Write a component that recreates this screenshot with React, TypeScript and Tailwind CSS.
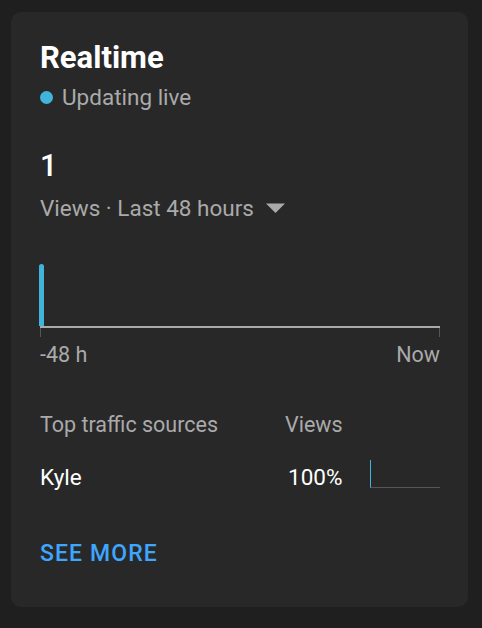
export default function App() {
  return (
    <main className="min-h-screen w-full bg-[#1f1f1f] px-[11px] pt-[12px] font-['Roboto',sans-serif]">
      {/* Realtime card */}
      <div className="w-[457px] h-[595px] rounded-[10px] bg-[#282828] pl-[29px] pr-[28px] pt-[28px]">
        <h2 className="text-[31px] leading-[36px] font-bold text-white">Realtime</h2>
        <div className="flex items-center gap-[9px] mt-[6px]">
          <span className="w-[13px] h-[13px] rounded-full bg-[#41b4db]" />
          <span className="text-[22.5px] leading-[30px] text-[#aaaaaa]">Updating live</span>
        </div>

        <div className="mt-[36px] text-[30.5px] leading-[36px] font-medium text-white">1</div>
        <div className="flex items-center gap-[12px] mt-[9px]">
          <span className="text-[22.5px] leading-[30px] text-[#aaaaaa]">Views · Last 48 hours</span>
          <svg width="19" height="10" viewBox="0 0 19 10">
            <path d="M0 0.5 L19 0.5 L9.5 10 Z" fill="#aaaaaa" />
          </svg>
        </div>

        {/* chart */}
        <div className="mt-[41px] h-[64px] flex items-end border-b-2 border-[#aaaaaa]">
          <div className="-ml-px w-[5px] h-[62px] rounded-t-full bg-[#41b4db]" />
        </div>
        <div className="flex justify-between h-[9px]">
          <span className="w-px h-full bg-[#555555]" />
          <span className="w-px h-full bg-[#555555]" />
        </div>
        <div className="flex justify-between mt-[4px] text-[21.5px] leading-[28px] text-[#aaaaaa]">
          <span>-48 h</span>
          <span>Now</span>
        </div>

        {/* traffic sources */}
        <div className="mt-[42px] flex text-[21.5px] leading-[28px] text-[#aaaaaa]">
          <span className="w-[245px]">Top traffic sources</span>
          <span>Views</span>
        </div>
        <div className="mt-[23px] h-[30px] flex items-center text-[22.5px] leading-[30px] text-white">
          <span className="w-[248px]">Kyle</span>
          <span className="w-[82px]">100%</span>
          <div className="mb-[6px] w-[70px] h-[28px] border-l border-l-[#41b4db] border-b border-b-[#555555]" />
        </div>

        <button className="mt-[47px] text-[23px] leading-[30px] font-medium tracking-[1.1px] text-[#3ea6ff]">SEE MORE</button>
      </div>
    </main>
  );
}
